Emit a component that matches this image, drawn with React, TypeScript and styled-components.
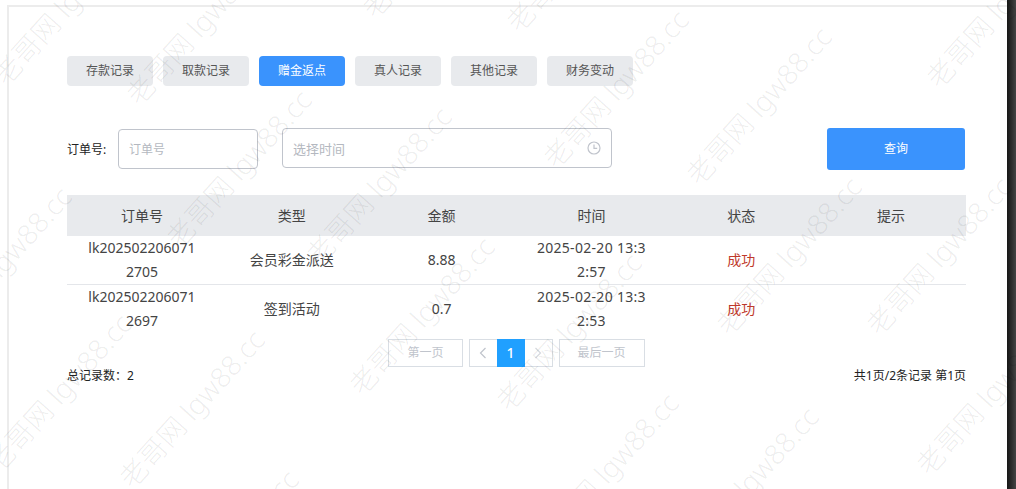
import React from "react";
import styled, { createGlobalStyle } from "styled-components";

const GlobalStyle = createGlobalStyle`
  html, body {
    margin: 0;
    padding: 0;
    height: 100%;
    overflow: hidden;
    background: #fff;
  }
  body {
    font-family: "Noto Sans", "Noto Sans CJK SC", sans-serif;
  }
  * {
    box-sizing: border-box;
  }
`;

const tabs = ["存款记录", "取款记录", "赠金返点", "真人记录", "其他记录", "财务变动"];
const ACTIVE_TAB = "赠金返点";

const columns = ["订单号", "类型", "金额", "时间", "状态", "提示"];

const rows = [
  { id: "lk2025022060712705", type: "会员彩金派送", amount: "8.88", time: "2025-02-20 13:32:57", status: "成功" },
  { id: "lk2025022060712697", type: "签到活动", amount: "0.7", time: "2025-02-20 13:32:53", status: "成功" },
];

// centres of the first glyph of every watermark
const marks = [
  [7, 70], [140, 90], [376, 3], [520, 17], [940, 73], [557, 153], [700, 170],
  [180, 233], [320, 250], [-60, 330], [363, 380], [510, 396], [730, 320], [880, 320],
  [0, 457], [133, 473], [547, 536], [687, 550], [930, 460], [167, 613],
];

const App = () => {
  return (
    <Page>
      <GlobalStyle />
      <Panel>
        <TabBar>
          {tabs.map((t) => (
            <Tab key={t} $active={t === ACTIVE_TAB}>{t}</Tab>
          ))}
        </TabBar>
        <SearchForm>
          <FieldLabel>订单号:</FieldLabel>
          <OrderInput placeholder="订单号" />
          <TimeField>
            <TimeText>选择时间</TimeText>
            <svg width="14" height="14" viewBox="0 0 14 14" fill="none" stroke="#c0c4cc" strokeWidth="1.2">
              <circle cx="7" cy="7" r="6" />
              <path d="M7 3.4V7.4H10.2" />
            </svg>
          </TimeField>
          <SearchButton>查询</SearchButton>
        </SearchForm>
        <Table>
          <thead>
            <tr>
              {columns.map((c) => (
                <HeadCell key={c}>{c}</HeadCell>
              ))}
            </tr>
          </thead>
          <tbody>
            {rows.map((r, i) => (
              <tr key={r.id}>
                <Cell $lined={i === 0}>{r.id}</Cell>
                <Cell $lined={i === 0}>{r.type}</Cell>
                <Cell $lined={i === 0}>{r.amount}</Cell>
                <TimeCell $lined={i === 0}>{r.time}</TimeCell>
                <StatusCell $lined={i === 0}>{r.status}</StatusCell>
                <Cell $lined={i === 0} />
              </tr>
            ))}
          </tbody>
        </Table>
        <Pagination>
          <PageLink>第一页</PageLink>
          <PageGroup>
            <ArrowLink>
              <svg width="8" height="12" viewBox="0 0 8 12" fill="none" stroke="#c0c4cc" strokeWidth="1.2">
                <path d="M6.5 1L1.5 6L6.5 11" />
              </svg>
            </ArrowLink>
            <CurrentPage>1</CurrentPage>
            <ArrowLink>
              <svg width="8" height="12" viewBox="0 0 8 12" fill="none" stroke="#d5d8dd" strokeWidth="1.2">
                <path d="M1.5 1L6.5 6L1.5 11" />
              </svg>
            </ArrowLink>
          </PageGroup>
          <PageLink>最后一页</PageLink>
        </Pagination>
        <Summary>
          <span>总记录数：2</span>
          <span>共1页/2条记录 第1页</span>
        </Summary>
      </Panel>
      <ScrollEdge />
      <Watermarks>
        {marks.map(([x, y]) => (
          <Mark key={`${x}-${y}`} $x={x} $y={y}>老哥网 lgw88.cc</Mark>
        ))}
      </Watermarks>
    </Page>
  );
};

export default App;

const Page = styled.div`
  position: relative;
  display: flex;
  width: 100%;
  height: 100vh;
  padding: 5px 0 0 7px;
  overflow: hidden;
`;

const Panel = styled.div`
  flex: 1;
  padding: 49px 50px 0 58px;
  border-top: 2px solid #ececec;
  border-left: 2px solid #ececec;
`;

const ScrollEdge = styled.div`
  position: absolute;
  top: 0;
  right: 0;
  bottom: 0;
  width: 9px;
  background: linear-gradient(90deg, #161616 0%, #2c2c2c 50%, #444 100%);
`;

const TabBar = styled.div`
  display: flex;
  gap: 10px;
`;

const Tab = styled.div<{ $active?: boolean }>`
  width: 86px;
  height: 30px;
  border-radius: 4px;
  font-size: 12px;
  line-height: 29px;
  text-align: center;
  color: ${(p) => (p.$active ? "#fff" : "#555")};
  background: ${(p) => (p.$active ? "#3a93fd" : "#e8eaed")};
`;

const SearchForm = styled.div`
  display: flex;
  align-items: center;
  height: 42px;
  margin-top: 42px;
  padding-right: 1px;
`;

const FieldLabel = styled.label`
  width: 51px;
  font-size: 12px;
  color: #222;
`;

const OrderInput = styled.input`
  width: 140px;
  height: 40px;
  padding: 0 10px;
  border: 1px solid #c0c4cc;
  border-radius: 4px;
  font-family: inherit;
  font-size: 12px;
  outline: none;
  background: transparent;
  &::placeholder {
    color: #b4b8c0;
    opacity: 1;
  }
`;

const TimeField = styled.div`
  display: flex;
  align-items: center;
  justify-content: space-between;
  width: 330px;
  height: 40px;
  margin-left: 24px;
  margin-top: -2px;
  padding: 0 10px;
  border: 1px solid #c0c4cc;
  border-radius: 4px;
`;

const TimeText = styled.span`
  font-size: 13px;
  color: #b4b8c0;
`;

const SearchButton = styled.div`
  width: 138px;
  height: 42px;
  margin-left: auto;
  border-radius: 3px;
  font-size: 12px;
  line-height: 41px;
  text-align: center;
  color: #fff;
  background: #3a93fd;
`;

const Table = styled.table`
  width: 100%;
  margin-top: 25px;
  table-layout: fixed;
  border-collapse: separate;
  border-spacing: 0;
`;

const HeadCell = styled.th`
  height: 41px;
  padding: 0 0 2px;
  font-size: 14px;
  font-weight: 400;
  color: #444;
  background: #e8eaed;
`;

const Cell = styled.td<{ $lined?: boolean }>`
  height: ${(p) => (p.$lined ? 49 : 48)}px;
  padding: 0 20px;
  font-size: 14px;
  line-height: 24px;
  text-align: center;
  word-break: break-all;
  color: #444;
  border-bottom: ${(p) => (p.$lined ? "1px solid #e4e6ea" : "none")};
`;

const TimeCell = styled(Cell)`
  letter-spacing: 0.3px;
`;

const StatusCell = styled(Cell)`
  color: #c0392b;
`;

const Pagination = styled.div`
  display: flex;
  justify-content: center;
  gap: 6px;
  margin-top: 6px;
`;

const PageLink = styled.div`
  padding: 0 18px;
  height: 28px;
  border: 1px solid #d9dee4;
  font-size: 12px;
  line-height: 26px;
  color: #c0c4cc;
`;

const PageGroup = styled.div`
  display: flex;
  border: 1px solid #d9dee4;
  height: 28px;
`;

const ArrowLink = styled.div`
  display: flex;
  align-items: center;
  justify-content: center;
  width: 27px;
`;

const CurrentPage = styled.div`
  width: 28px;
  height: 28px;
  margin-top: -1px;
  font-size: 14px;
  font-weight: 500;
  line-height: 28px;
  text-align: center;
  color: #fff;
  background: #20a0ff;
`;

const Summary = styled.div`
  display: flex;
  justify-content: space-between;
  margin-top: 1px;
  font-size: 12px;
  line-height: 16px;
  color: #222;
`;

const Watermarks = styled.div`
  position: absolute;
  inset: 0;
  overflow: hidden;
  pointer-events: none;
`;

const Mark = styled.span<{ $x: number; $y: number }>`
  position: absolute;
  left: ${(p) => p.$x - 9}px;
  top: ${(p) => p.$y - 4}px;
  font-size: 28px;
  line-height: 28px;
  font-weight: 300;
  white-space: nowrap;
  color: rgba(0, 0, 0, 0.08);
  transform: rotate(-48deg);
  transform-origin: 0 50%;
`;
